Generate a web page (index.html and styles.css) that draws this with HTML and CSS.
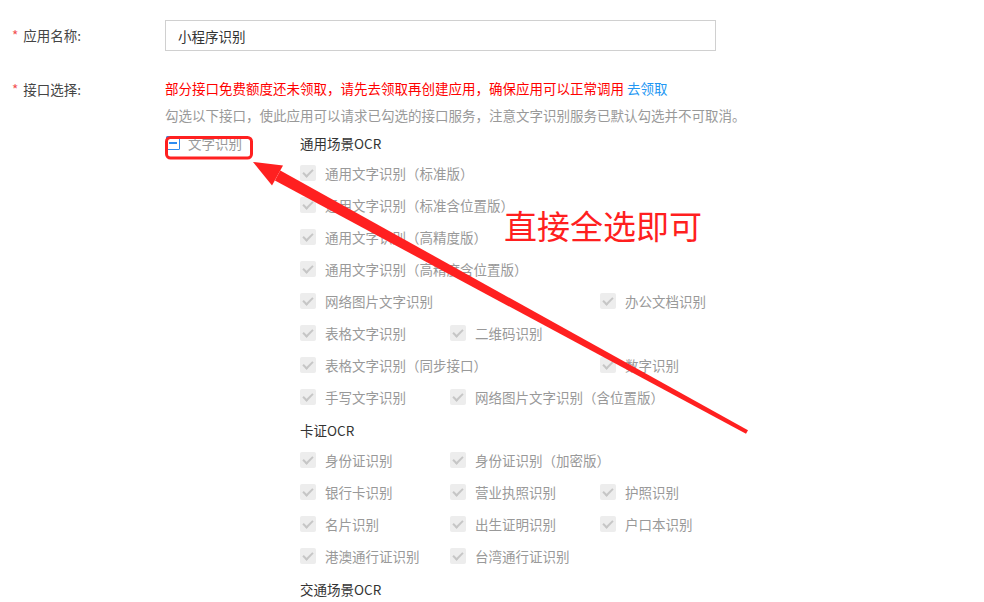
FILE: index.html
```html
<!DOCTYPE html>
<html>
<head>
    <meta charset="utf-8">
    <title>创建应用</title>
    <link rel="stylesheet" href="styles.css">
</head>
<body>
    <div class="form">
        <div class="row">
            <label class="label"><span class="req">*</span>应用名称:</label>
            <div class="field">
                <input class="input" type="text" value="小程序识别">
            </div>
        </div>

        <div class="row row-api">
            <label class="label label-api"><span class="req">*</span>接口选择:</label>
            <div class="field">
                <p class="warn">部分接口免费额度还未领取，请先去领取再创建应用，确保应用可以正常调用 <a href="#" class="link">去领取</a></p>
                <p class="tip">勾选以下接口，使此应用可以请求已勾选的接口服务，注意文字识别服务已默认勾选并不可取消。</p>

                <div class="api">
                    <div class="api-root">
                        <span class="cb-half"></span>
                        <span class="root-text">文字识别</span>
                    </div>
                    <div class="api-groups">
                        <div class="group-title">通用场景OCR</div>
                        <div class="grid">
                            <div class="item span3"><span class="cb"></span>通用文字识别（标准版）</div>
                            <div class="item span3"><span class="cb"></span>通用文字识别（标准含位置版）</div>
                            <div class="item span3"><span class="cb"></span>通用文字识别（高精度版）</div>
                            <div class="item span3"><span class="cb"></span>通用文字识别（高精度含位置版）</div>
                            <div class="item span2"><span class="cb"></span>网络图片文字识别</div>
                            <div class="item"><span class="cb"></span>办公文档识别</div>
                            <div class="item"><span class="cb"></span>表格文字识别</div>
                            <div class="item span2"><span class="cb"></span>二维码识别</div>
                            <div class="item span2"><span class="cb"></span>表格文字识别（同步接口）</div>
                            <div class="item"><span class="cb"></span>数字识别</div>
                            <div class="item"><span class="cb"></span>手写文字识别</div>
                            <div class="item span2"><span class="cb"></span>网络图片文字识别（含位置版）</div>
                        </div>

                        <div class="group-title gap">卡证OCR</div>
                        <div class="grid">
                            <div class="item"><span class="cb"></span>身份证识别</div>
                            <div class="item span2"><span class="cb"></span>身份证识别（加密版）</div>
                            <div class="item"><span class="cb"></span>银行卡识别</div>
                            <div class="item"><span class="cb"></span>营业执照识别</div>
                            <div class="item"><span class="cb"></span>护照识别</div>
                            <div class="item"><span class="cb"></span>名片识别</div>
                            <div class="item"><span class="cb"></span>出生证明识别</div>
                            <div class="item"><span class="cb"></span>户口本识别</div>
                            <div class="item"><span class="cb"></span>港澳通行证识别</div>
                            <div class="item span2"><span class="cb"></span>台湾通行证识别</div>
                        </div>

                        <div class="group-title gap">交通场景OCR</div>
                    </div>
                </div>
            </div>
        </div>
    </div>

    <!-- annotation drawn over the screenshot -->
    <svg class="mark" width="984" height="602" viewBox="0 0 984 602">
        <rect x="166.5" y="137.5" width="85" height="20.5" rx="4" fill="none" stroke="#ff2020" stroke-width="3"/>
        <polygon fill="#ff2020" points="747,432 746,433.7 274.9,180.6 280.3,170.6 748,430.3"/>
        <polygon fill="#ff2020" points="253,162 283,165.5 272,185.5"/>
    </svg>
    <div class="note">直接全选即可</div>
</body>
</html>
```

FILE: styles.css
```css
body { margin: 0; padding: 20px 0 0; font-family: "Microsoft YaHei", "Noto Sans CJK SC", sans-serif; color: #333; background: #fff; position: relative; width: 984px; height: 582px; overflow: hidden; }
p { margin: 0; }

.row { display: flex; }
.label { width: 165px; flex: none; padding-left: 12px; box-sizing: border-box; font-size: 13.5px; line-height: 31px; color: #444; }
.req { color: #f24e4e; margin-right: 5px; }
.field { flex: 1; }
.input { width: 551px; height: 31px; box-sizing: border-box; border: 1px solid #d0d0d0; padding: 0 12px; font: 13.5px "Microsoft YaHei", "Noto Sans CJK SC", sans-serif; color: #333; outline: none; }

.row-api { margin-top: 26px; }
.label-api { line-height: 24px; }
.warn { font-size: 13.5px; line-height: 22px; color: #ff0000; }
.link { color: #2196f3; text-decoration: none; }
.tip { margin-top: 5px; font-size: 13.5px; line-height: 22px; color: #999; }

.api { display: flex; margin-top: 3px; }
.api-root { width: 135px; flex: none; display: flex; align-items: center; height: 28px; }
.cb-half { width: 12px; height: 12px; margin-left: 1px; border: 1px solid #2d8cf0; border-radius: 1px; position: relative; background: #fff; }
.cb-half::after { content: ""; position: absolute; left: 2px; right: 2px; top: 5px; height: 2px; background: #2d8cf0; }
.root-text { margin-left: 8px; font-size: 13.5px; color: #999; }

.group-title { height: 28px; line-height: 28px; font-size: 13.5px; color: #333; }
.group-title.gap { margin-top: 3px; }
.grid { display: grid; grid-template-columns: repeat(3, 150px); }
.item { height: 32px; display: flex; align-items: center; font-size: 13.5px; color: #999; white-space: nowrap; }
.span2 { grid-column: span 2; }
.span3 { grid-column: span 3; }
.cb { width: 16px; height: 16px; margin-right: 9px; border-radius: 2px; background: #ededed; position: relative; flex: none; }
.cb::after { content: ""; position: absolute; left: 5px; top: 2px; width: 4px; height: 8px; border: solid #c6c6c6; border-width: 0 2px 2px 0; transform: rotate(45deg); }

.mark { position: absolute; left: 0; top: 0; pointer-events: none; }
.note { position: absolute; left: 504px; top: 201px; font-size: 33px; line-height: 48px; color: #ff1f1f; font-family: "Microsoft YaHei", "Noto Sans CJK SC", sans-serif; }
```
